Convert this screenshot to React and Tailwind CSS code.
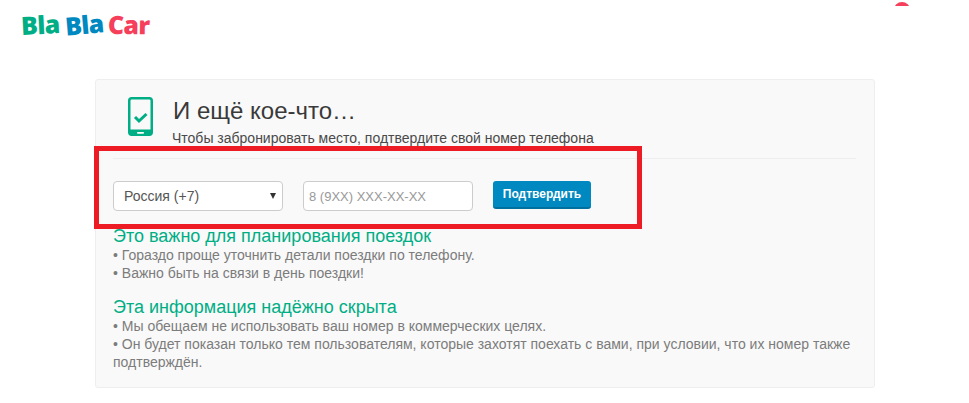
import React from 'react';

function PhoneIcon() {
  return (
    <svg width="25" height="39" viewBox="0 0 25 39" fill="none" className="shrink-0">
      <rect x="1.25" y="1.25" width="22.5" height="36.5" rx="2.4" stroke="#00ae85" strokeWidth="2.5" />
      <rect x="1.25" y="32.5" width="22.5" height="5.25" fill="#00ae85" />
      <rect x="9" y="35" width="7" height="1.7" rx="0.8" fill="#fff" />
      <path d="M7 20 L11 24 L18.5 17" stroke="#00ae85" strokeWidth="3" />
    </svg>
  );
}

function Logo() {
  return (
    <div className="flex items-baseline font-['Open_Sans',sans-serif] text-[25px] font-extrabold leading-none tracking-[-0.7px]">
      <span className="-rotate-[3deg] text-[#00ae85]">Bla</span>
      <span className="ml-[6px] -rotate-[5deg] text-[#0088c0]">Bla</span>
      <span className="ml-[4px] rotate-[1deg] text-[#f53f5b]">Car</span>
    </div>
  );
}

export default function App() {
  return (
    <div className="relative h-[403px] w-[969px] overflow-hidden bg-white font-['Liberation_Sans',Arial,sans-serif]">
      <div className="h-[79px] pl-[21px] pt-[12px]">
        <Logo />
      </div>

      <div className="ml-[95px] h-[309px] w-[780px] rounded-[3px] border border-[#eeeeee] bg-[#f9f9f9] pl-[17px] pr-[18px] pt-[17px]">
        <div className="flex h-[62px] gap-[20px] border-b border-[#eeeeee] pl-[15px]">
          <PhoneIcon />
          <div>
            <h1 className="text-[24px] leading-[28px] text-[#3a3a3a]">И ещё кое-что…</h1>
            <p className="mt-[3px] -ml-[1px] text-[14px] leading-[20px] text-[#4a4a4a]">
              Чтобы забронировать место, подтвердите свой номер телефона
            </p>
          </div>
        </div>

        <div className="mt-[22px] flex items-start">
          <div className="relative flex h-[30px] w-[170px] items-center rounded-[4px] border border-[#cccccc] bg-white pl-[10px] text-[14px] text-[#555555]">
            Россия (+7)
            <span className="absolute right-[6px] top-[11px] h-0 w-0 border-x-[3px] border-t-[6px] border-x-transparent border-t-[#333333]" />
          </div>
          <input
            readOnly
            placeholder="8 (9XX) XXX-XX-XX"
            className="ml-[20px] h-[30px] w-[170px] rounded-[4px] border border-[#cccccc] bg-white px-[5px] text-[13px] placeholder:text-[#999999]"
          />
          <button className="ml-[20px] h-[28px] w-[98px] rounded-[3px] border-b-2 border-[#00709e] bg-[#0088c0] text-[12px] font-bold text-white">
            Подтвердить
          </button>
        </div>

        <h2 className="mt-[16px] text-[18px] leading-[19px] text-[#00ae85]">Это важно для планирования поездок</h2>
        <p className="text-[14px] leading-[18px] text-[#7c7c7c]">• Гораздо проще уточнить детали поездки по телефону.</p>
        <p className="text-[14px] leading-[18px] text-[#7c7c7c]">• Важно быть на связи в день поездки!</p>

        <h2 className="mt-[16px] text-[18px] leading-[19px] text-[#00ae85]">Эта информация надёжно скрыта</h2>
        <p className="text-[14px] leading-[18px] text-[#7c7c7c]">• Мы обещаем не использовать ваш номер в коммерческих целях.</p>
        <p className="text-[14px] leading-[18px] text-[#7c7c7c]">
          • Он будет показан только тем пользователям, которые захотят поехать с вами, при условии, что их номер также подтверждён.
        </p>
      </div>

      {/* annotation drawn over the page */}
      <div className="pointer-events-none absolute left-[94px] top-[146px] h-[83px] w-[548px] border-[5px] border-[#ed1c24]" />

      {/* clipped notification dot */}
      <div className="absolute left-[894px] top-[2px] h-[4px] w-[16px] overflow-hidden">
        <div className="h-[16px] w-[16px] rounded-full bg-[#f53f5b]" />
      </div>
    </div>
  );
}
